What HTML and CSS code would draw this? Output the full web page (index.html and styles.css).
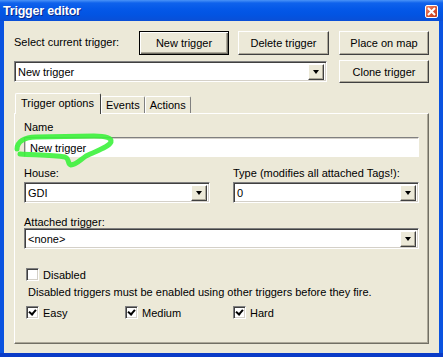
FILE: index.html
```html
<!DOCTYPE html>
<html lang="en">
<head>
  <meta charset="UTF-8" />
  <title>Trigger editor</title>
  <link rel="stylesheet" href="styles.css">
</head>
<body>
  <div class="window">
    <div class="titlebar">
      <span class="title">Trigger editor</span>
      <div class="close-btn">
        <svg width="9" height="9" viewBox="0 0 9 9"><path d="M1 1 L8 8 M8 1 L1 8" stroke="#fff" stroke-width="2"/></svg>
      </div>
    </div>

    <div class="client">
      <!-- top controls -->
      <div class="row row-top">
        <span class="select-label">Select current trigger:</span>
        <button class="btn btn-default">New trigger</button>
        <button class="btn btn-delete">Delete trigger</button>
        <button class="btn btn-place">Place on map</button>
      </div>
      <div class="row row-combo">
        <div class="combo combo-trigger">
          <span class="combo-text">New trigger</span>
          <span class="combo-arrow"></span>
        </div>
        <button class="btn btn-clone">Clone trigger</button>
      </div>

      <!-- tabs -->
      <div class="tabs">
        <div class="tab active">Trigger options</div>
        <div class="tab">Events</div>
        <div class="tab">Actions</div>
      </div>

      <div class="panel">
        <div class="field-label">Name</div>
        <div class="textbox">New trigger</div>

        <div class="pair">
          <div class="pair-col">
            <div class="field-label">House:</div>
            <div class="combo">
              <span class="combo-text">GDI</span>
              <span class="combo-arrow"></span>
            </div>
          </div>
          <div class="pair-col">
            <div class="field-label">Type (modifies all attached Tags!):</div>
            <div class="combo">
              <span class="combo-text">0</span>
              <span class="combo-arrow"></span>
            </div>
          </div>
        </div>

        <div class="field-label">Attached trigger:</div>
        <div class="combo combo-wide">
          <span class="combo-text">&lt;none&gt;</span>
          <span class="combo-arrow"></span>
        </div>

        <label class="check check-disabled"><span class="box"></span>Disabled</label>
        <div class="note">Disabled triggers must be enabled using other triggers before they fire.</div>

        <div class="diffs">
          <label class="check diff-easy"><span class="box checked"></span>Easy</label>
          <label class="check diff-medium"><span class="box checked"></span>Medium</label>
          <label class="check diff-hard"><span class="box checked"></span>Hard</label>
        </div>

        <!-- hand drawn highlight over the name box -->
        <svg class="scribble" width="110" height="40" viewBox="0 0 110 40">
          <path d="M3 16 C3 9 10 4 22 4 L80 3 C92 3 98 5 97 9 C95 14 82 18 72 23 C66 27 62 32 57 32 C53 31 56 26 51 24 C38 22 20 22 6 21"
                fill="none" stroke="#3cf23c" stroke-width="5" stroke-linecap="round" stroke-linejoin="round" opacity="0.9"/>
        </svg>
      </div>
    </div>
  </div>
</body>
</html>
```

FILE: styles.css
```css
body {
  margin: 0;
  font-family: "Liberation Sans", Arial, sans-serif;
  font-size: 11px;
  color: #000;
  background: #ece9d8;
}

.window {
  width: 443px;
  height: 357px;
  box-sizing: border-box;
  background: #0a53e0;
  border-bottom: 4px solid #0a3bc7;
  display: flex;
  flex-direction: column;
}

.titlebar {
  height: 21px;
  display: flex;
  align-items: center;
  justify-content: space-between;
  padding: 0 5px 0 3px;
  background: linear-gradient(to bottom, #4a93f7 0, #0f62ec 3px, #0458e8 9px, #0254e2 15px, #0a4fd6 21px);
}

.title {
  color: #fff;
  font-weight: bold;
  font-size: 12.5px;
  text-shadow: 1px 1px 0 #0a2a8a;
  letter-spacing: -0.2px;
}

.close-btn {
  width: 13px;
  height: 13px;
  box-sizing: border-box;
  border: 1px solid #fff;
  border-radius: 2px;
  background: linear-gradient(135deg, #f08a6c, #d8502e 60%, #c23c1c);
  display: flex;
  align-items: center;
  justify-content: center;
  margin-top: 1px;
}

.client {
  flex-grow: 1;
  margin: 0 4px;
  background: #ece9d8;
  padding: 10px 10px 0 10px;
  position: relative;
}

.row {
  display: flex;
  align-items: center;
}

.select-label {
  width: 125px;
  margin-top: -2px;
}

.btn {
  font-family: inherit;
  font-size: 11px;
  height: 24px;
  background: #ece9d8;
  border: 1px solid;
  border-color: #fff #404040 #404040 #fff;
  box-shadow: inset -1px -1px 0 #aca899;
  padding: 0;
  color: #000;
}

.btn-default {
  width: 90px;
  border: 1px solid #000;
  box-shadow: inset 1px 1px 0 #fff, inset -1px -1px 0 #716f64, inset -2px -2px 0 #aca899;
}

.btn-delete {
  width: 91px;
  margin-left: 9px;
}

.btn-place {
  width: 90px;
  margin-left: 10px;
}

.row-combo {
  margin-top: 5px;
}

.btn-clone {
  width: 90px;
  height: 23px;
  margin-left: 12px;
}

.combo {
  height: 21px;
  box-sizing: border-box;
  background: #fff;
  border: 1px solid;
  border-color: #808080 #fff #fff #808080;
  box-shadow: inset 1px 1px 0 #404040, inset -1px -1px 0 #d4d0c8;
  display: flex;
  align-items: center;
  justify-content: space-between;
  padding: 0 2px 0 3px;
}

.combo-trigger {
  width: 313px;
  height: 21px;
}

.combo-text {
  padding-top: 1px;
}

.combo-arrow {
  width: 16px;
  height: 16px;
  box-sizing: border-box;
  background: #ece9d8;
  border: 1px solid;
  border-color: #fff #404040 #404040 #fff;
  box-shadow: inset -1px -1px 0 #aca899;
  position: relative;
}

.combo-arrow::after {
  content: "";
  position: absolute;
  left: 4px;
  top: 5px;
  border-left: 3.5px solid transparent;
  border-right: 3.5px solid transparent;
  border-top: 4px solid #000;
}

.tabs {
  display: flex;
  align-items: flex-end;
  margin-top: 10px;
  padding-left: 1px;
  height: 20px;
  position: relative;
  z-index: 1;
}

.tab {
  height: 17px;
  box-sizing: border-box;
  padding: 2px 4px 0 4px;
  border: 1px solid;
  border-bottom: none;
  border-color: #fff #808080 #808080 #fff;
  border-radius: 2px 2px 0 0;
  background: #ece9d8;
}

.tab.active {
  height: 21px;
  width: 86px;
  padding: 3px 0 0 5px;
  margin-bottom: -1px;
  border-right: 1px solid #404040;
}

.panel {
  height: 231px;
  box-sizing: border-box;
  border: 1px solid;
  border-color: #fff #716f64 #716f64 #fff;
  box-shadow: inset -1px -1px 0 #aca899;
  padding: 7px 10px 0 9px;
  position: relative;
}

.field-label {
  height: 14px;
}

.textbox {
  margin-top: 2px;
  height: 20px;
  box-sizing: border-box;
  background: #fff;
  border: 1px solid;
  border-color: #808080 #fff #fff #808080;
  box-shadow: inset 1px 1px 0 #d4d0c8;
  padding: 4px 0 0 5px;
  width: 395px;
}

.pair {
  display: flex;
  gap: 23px;
  margin-top: 10px;
  width: 395px;
}

.pair-col {
  width: 186px;
}

.pair-col .combo {
  margin-top: 1px;
}

.pair + .field-label {
  margin-top: 13px;
}

.combo-wide {
  width: 395px;
  margin-top: -2px;
}

.check {
  display: flex;
  align-items: center;
  height: 13px;
}

.box {
  width: 13px;
  height: 13px;
  box-sizing: border-box;
  background: #fff;
  border: 1px solid;
  border-color: #808080 #fff #fff #808080;
  box-shadow: inset 1px 1px 0 #404040, inset -1px -1px 0 #d4d0c8;
  margin-right: 4px;
  position: relative;
}

.box.checked::after {
  content: "";
  position: absolute;
  left: 3px;
  top: 1px;
  width: 3px;
  height: 5px;
  border: solid #000;
  border-width: 0 2px 2px 0;
  transform: rotate(40deg);
}

.check-disabled {
  margin-top: 19px;
  margin-left: 2px;
}

.note {
  margin-top: 5px;
  margin-left: 4px;
}

.diffs {
  display: flex;
  margin-top: 8px;
  margin-left: 2px;
}

.diff-easy {
  width: 99px;
}

.diff-medium {
  width: 108px;
}

.scribble {
  position: absolute;
  left: -1px;
  top: 19px;
  pointer-events: none;
}
```
